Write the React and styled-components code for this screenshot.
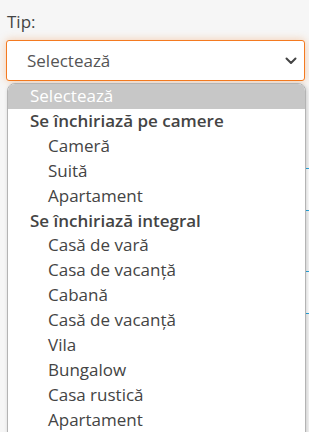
import React from 'react';
import styled, { createGlobalStyle } from 'styled-components';

const GlobalStyle = createGlobalStyle`
  html, body {
    margin: 0;
    padding: 0;
    background: #f6f6f6;
    font-family: "Open Sans", "Noto Sans", sans-serif;
    overflow: hidden;
  }
`;

const groups = [
  { label: 'Se închiriază pe camere', items: ['Cameră', 'Suită', 'Apartament'] },
  {
    label: 'Se închiriază integral',
    items: ['Casă de vară', 'Casa de vacanță', 'Cabană', 'Casă de vacanță', 'Vila', 'Bungalow', 'Casa rustică', 'Apartament'],
  },
];

const Page = styled.div`
  position: relative;
  width: 309px;
  height: 432px;
  padding: 10px 4px 0 6px;
  box-sizing: border-box;
`;

const Label = styled.div`
  font-size: 17px;
  line-height: 24px;
  color: #444;
  padding-left: 1px;
  margin-bottom: 6px;
`;

const SelectBox = styled.div`
  height: 41px;
  box-sizing: border-box;
  display: flex;
  align-items: center;
  justify-content: space-between;
  padding: 0 7px 0 20px;
  background: #fff;
  border: 1px solid #f47a20;
  border-radius: 3px;
  box-shadow: 0 0 8px rgba(244, 122, 32, 0.35);
  font-size: 17px;
  color: #555;
`;

const Hidden = styled.div`
  display: flex;
  flex-direction: column;
  margin-top: 87px;
  gap: 60px;
`;

const Field = styled.div`
  height: 43px;
  box-sizing: border-box;
  margin-left: 1px;
  margin-right: -10px;
  border: 1px solid #29a8e0;
  border-radius: 3px;
  background: #fff;
`;

const List = styled.div`
  position: absolute;
  left: 7px;
  top: 83px;
  width: 299px;
  height: 360px;
  box-sizing: border-box;
  background: #fff;
  border: 1px solid #b4b4b4;
  border-radius: 8px 8px 0 0;
  box-shadow: 1px 1px 4px rgba(0, 0, 0, 0.18);
  overflow: hidden;
  display: flex;
  flex-direction: column;
`;

const Row = styled.div`
  flex: none;
  height: 24.92px;
  line-height: 24.92px;
  font-size: 17px;
  white-space: nowrap;
  color: ${p => (p.$active ? '#fff' : '#444')};
  background: ${p => (p.$active ? '#c7c7c7' : 'transparent')};
  font-weight: ${p => (p.$group ? 600 : 400)};
  padding-left: ${p => (p.$indent ? 40 : 22)}px;
`;

const Chevron = () => (
  <svg width="12" height="8" viewBox="0 0 12 8" fill="none">
    <path d="M1.5 1.5L6 6L10.5 1.5" stroke="#444" strokeWidth="2" strokeLinecap="round" strokeLinejoin="round" />
  </svg>
);

export default function App() {
  return (
    <Page>
      <GlobalStyle />
      <Label>Tip:</Label>
      <SelectBox>
        <span>Selectează</span>
        <Chevron />
      </SelectBox>
      <Hidden>
        <Field />
        <Field />
      </Hidden>
      <List>
        <Row $active>Selectează</Row>
        {groups.map(g => (
          <React.Fragment key={g.label}>
            <Row $group>{g.label}</Row>
            {g.items.map((it, i) => (
              <Row key={i} $indent>{it}</Row>
            ))}
          </React.Fragment>
        ))}
      </List>
    </Page>
  );
}
